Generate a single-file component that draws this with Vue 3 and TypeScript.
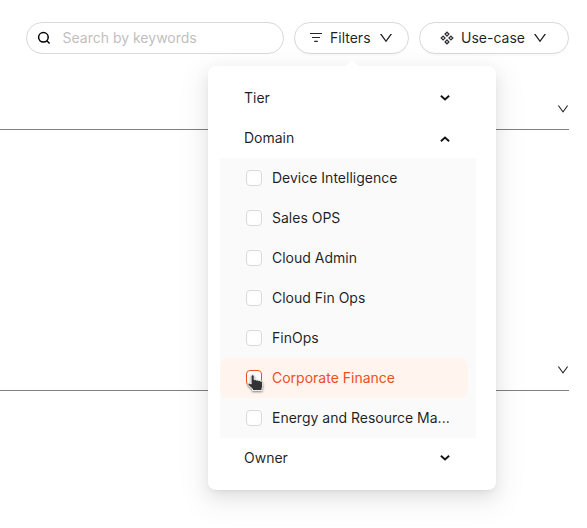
<script setup lang="ts">
import { ref } from 'vue'

interface Section {
  name: string
  open: boolean
  options: string[]
}

const keywords = ref('')
const active = ref('Corporate Finance')

const sections = ref<Section[]>([
  { name: 'Tier', open: false, options: [] },
  {
    name: 'Domain',
    open: true,
    options: [
      'Device Intelligence',
      'Sales OPS',
      'Cloud Admin',
      'Cloud Fin Ops',
      'FinOps',
      'Corporate Finance',
      'Energy and Resource Ma...',
    ],
  },
  { name: 'Owner', open: false, options: [] },
])

const downPath =
  'M884 256h-75c-5.1 0-9.9 2.5-12.9 6.6L512 654.2 227.9 262.6c-3-4.1-7.8-6.6-12.9-6.6h-75c-6.5 0-10.3 7.4-6.5 12.7l352.6 486.1c12.8 17.6 39 17.6 51.7 0l352.6-486.1c3.9-5.3.1-12.7-6.4-12.7z'
</script>

<template>
  <main class="page">
    <header class="toolbar">
      <label class="search">
        <svg class="search-icon" viewBox="0 0 14 14">
          <circle cx="6.4" cy="6.3" r="4.8" />
          <path d="M9.8 9.7l2.8 2.8" />
        </svg>
        <input v-model="keywords" type="text" placeholder="Search by keywords" />
      </label>

      <div class="filters">
        <button class="pill" type="button">
          <svg class="lines-icon" viewBox="0 0 14 14">
            <path d="M1 2.5h12M3 6.5h8M5.2 10.3h3.6" />
          </svg>
          <span>Filters</span>
          <svg class="down" viewBox="64 64 896 896"><path :d="downPath" /></svg>
        </button>

        <div class="popover">
          <template v-for="section in sections" :key="section.name">
            <div class="section" @click="section.open = !section.open">
              <span>{{ section.name }}</span>
              <svg class="caret" :class="{ open: section.open }" viewBox="0 0 10 6">
                <path d="M0.9 0.8L5 4.4L9.1 0.8" />
              </svg>
            </div>
            <ul v-if="section.open" class="options">
              <li
                v-for="option in section.options"
                :key="option"
                class="option"
                :class="{ active: option === active }"
                @mouseenter="active = option"
              >
                <span class="box">
                  <svg v-if="option === active" class="hand" viewBox="0 0 16 18">
                    <path
                      d="M4.1 2.2c0-1.9 3.1-1.9 3.1 0v3.6c.9-.4 1.7-.2 2.1.3.8-.3 1.7-.1 2.1.5.7-.3 1.6-.1 2 .5 1.1-.2 2.2.4 2.2 1.6v3.6c0 1.1-.7 1.7-.7 2.8v1.4H5.5v-1.6L1.6 11.5c-1.2-1.2-.3-2.9 1.2-2.2l1.3.7z"
                    />
                  </svg>
                </span>
                <span class="label">{{ option }}</span>
              </li>
            </ul>
          </template>
        </div>
      </div>

      <button class="pill usecase" type="button">
        <svg class="diamonds" viewBox="0 0 14 14">
          <path d="M7 1.2l1.9 1.9L7 5 5.1 3.1zM3.1 5.1L5 7 3.1 8.9 1.2 7zM10.9 5.1L12.8 7l-1.9 1.9L9 7zM7 9l1.9 1.9L7 12.8l-1.9-1.9z" />
        </svg>
        <span>Use-case</span>
        <svg class="down" viewBox="64 64 896 896"><path :d="downPath" /></svg>
      </button>
    </header>

    <section class="group first">
      <svg class="down small" viewBox="64 64 896 896"><path :d="downPath" /></svg>
    </section>
    <section class="group second">
      <svg class="down small" viewBox="64 64 896 896"><path :d="downPath" /></svg>
    </section>
  </main>
</template>

<style>
body {
  margin: 0;
  background: #fff;
  overflow: hidden;
}
</style>

<style scoped>
* {
  box-sizing: border-box;
}

.page {
  height: 528px;
  padding: 22px 18px 0 0;
  overflow: hidden;
  font: 14px/22px Inter, sans-serif;
  color: rgba(0, 0, 0, 0.88);
}

.toolbar {
  display: flex;
  gap: 10px;
  height: 32px;
  padding-left: 26px;
}

.search {
  display: flex;
  align-items: center;
  gap: 11.5px;
  width: 258px;
  padding: 0 10px;
  border: 1px solid #d9d9d9;
  border-radius: 16px;
}

.search-icon {
  flex: none;
  width: 14px;
  height: 14px;
  fill: none;
  stroke: #000;
  stroke-width: 1.5;
}

.search input {
  width: 100%;
  min-width: 0;
  padding: 0;
  border: 0;
  outline: 0;
  background: none;
  font: inherit;
}

.search input::placeholder {
  color: #bfbfbf;
}

.filters {
  position: relative;
}

.pill {
  display: flex;
  align-items: center;
  gap: 7px;
  width: 115px;
  height: 32px;
  padding: 0 15px 0 14px;
  border: 1px solid #d9d9d9;
  border-radius: 16px;
  background: #fff;
  box-shadow: 0 2px 0 rgba(0, 0, 0, 0.02);
  color: rgba(0, 0, 0, 0.88);
  font: inherit;
}

.usecase {
  width: 150px;
  padding: 0 21px 0 20px;
}

.pill svg {
  flex: none;
  width: 14px;
  height: 14px;
}

.pill .down {
  margin-left: auto;
}

.lines-icon {
  fill: none;
  stroke: #25252b;
  stroke-width: 1.2;
}

.diamonds {
  fill: none;
  stroke: #30303a;
  stroke-width: 1.3;
}

.down {
  fill: rgba(0, 0, 0, 0.88);
}

.down.small {
  width: 12px;
  height: 12px;
}

.group {
  display: flex;
  align-items: flex-end;
  justify-content: flex-end;
  border-bottom: 1px solid #7f7f83;
}

.first {
  height: 76px;
  padding-bottom: 14px;
}

.second {
  height: 261px;
  padding-bottom: 14px;
}

.popover {
  position: absolute;
  top: 44px;
  left: -86px;
  z-index: 1;
  width: 288px;
  height: 424px;
  padding: 12px 20px 12px 12px;
  border-radius: 8px;
  background: #fff;
  box-shadow:
    0 6px 16px 0 rgba(0, 0, 0, 0.08),
    0 3px 6px -4px rgba(0, 0, 0, 0.12),
    0 9px 28px 8px rgba(0, 0, 0, 0.05);
}

.popover::before {
  content: '';
  position: absolute;
  top: -6px;
  left: 136px;
  width: 16px;
  height: 6px;
  background: #fff;
  clip-path: polygon(0 100%, 15% 88%, 42% 12%, 50% 0, 58% 12%, 85% 88%, 100% 100%);
}

.section {
  display: flex;
  align-items: center;
  justify-content: space-between;
  height: 40px;
  padding: 0 26px 0 24px;
}

.caret {
  width: 10px;
  height: 6px;
  fill: none;
  stroke: #141414;
  stroke-width: 2;
}

.caret.open {
  margin-top: 2px;
  transform: rotate(180deg);
}

.options {
  width: 256px;
  margin: 0;
  padding: 0 8px 0 0;
  background: #fafafa;
  list-style: none;
}

.option {
  display: flex;
  align-items: center;
  gap: 10px;
  height: 40px;
  padding: 0 16px 0 26px;
  border-radius: 8px;
}

.option.active {
  background: #fff5ee;
  color: #f04e23;
}

.box {
  position: relative;
  flex: none;
  width: 16px;
  height: 16px;
  border: 1px solid #d9d9d9;
  border-radius: 4px;
  background: #fff;
}

.active .box {
  border-color: #f04e23;
}

.label {
  white-space: nowrap;
}

.hand {
  position: absolute;
  top: 3px;
  left: 0;
  width: 16px;
  height: 18px;
  overflow: visible;
  fill: #333;
  stroke: #fff;
  stroke-width: 0.9;
  filter: drop-shadow(0 1px 1px rgba(0, 0, 0, 0.5));
}
</style>
